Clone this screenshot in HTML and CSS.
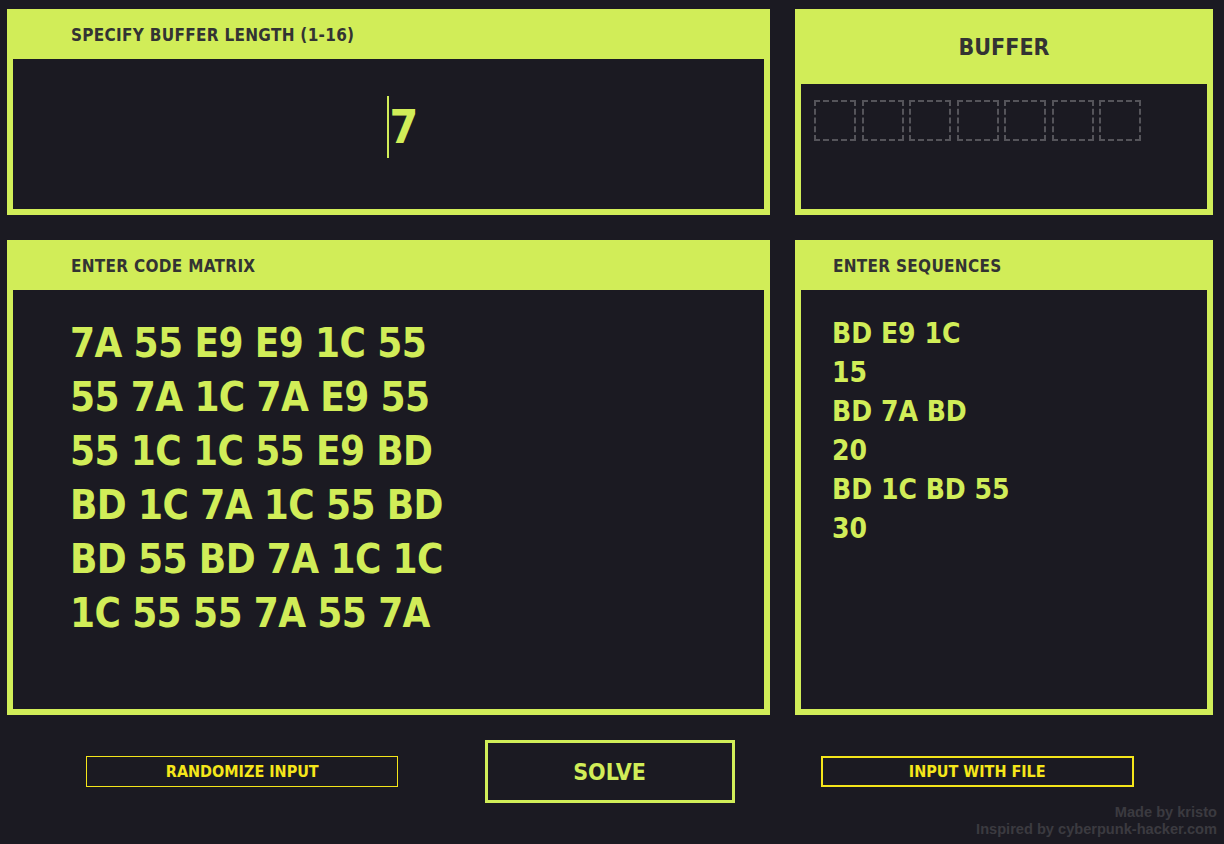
FILE: index.html
```html
<!DOCTYPE html>
<html lang="en">
<head>
    <meta charset="UTF-8">
    <meta name="viewport" content="width=device-width, initial-scale=1.0">
    <title>Breach Protocol Solver</title>
    <link rel="stylesheet" href="styles.css">
</head>
<body>
    <div class="board">
        <section class="panel">
            <div class="panel-head">SPECIFY BUFFER LENGTH (1-16)</div>
            <div class="panel-body length-body">
                <span class="caret"></span><span class="length-value">7</span>
            </div>
        </section>

        <section class="panel">
            <div class="panel-head buffer-head">BUFFER</div>
            <div class="panel-body buffer-body">
                <span class="slot"></span>
                <span class="slot"></span>
                <span class="slot"></span>
                <span class="slot"></span>
                <span class="slot"></span>
                <span class="slot"></span>
                <span class="slot"></span>
            </div>
        </section>

        <section class="panel">
            <div class="panel-head">ENTER CODE MATRIX</div>
            <div class="panel-body matrix-body">
                <div>7A 55 E9 E9 1C 55</div>
                <div>55 7A 1C 7A E9 55</div>
                <div>55 1C 1C 55 E9 BD</div>
                <div>BD 1C 7A 1C 55 BD</div>
                <div>BD 55 BD 7A 1C 1C</div>
                <div>1C 55 55 7A 55 7A</div>
            </div>
        </section>

        <section class="panel">
            <div class="panel-head seq-head">ENTER SEQUENCES</div>
            <div class="panel-body seq-body">
                <div>BD E9 1C</div>
                <div>15</div>
                <div>BD 7A BD</div>
                <div>20</div>
                <div>BD 1C BD 55</div>
                <div>30</div>
            </div>
        </section>
    </div>

    <div class="actions">
        <button type="button" class="btn-small">RANDOMIZE INPUT</button>
        <button type="button" class="btn-solve">SOLVE</button>
        <button type="button" class="btn-small btn-file">INPUT WITH FILE</button>
    </div>

    <footer>
        <div>Made by kristo</div>
        <div>Inspired by cyberpunk-hacker.com</div>
    </footer>
</body>
</html>
```

FILE: styles.css
```css
body {
    margin: 0;
    padding: 0;
    background-color: #1b1a22;
    font-family: "DejaVu Sans Condensed", "DejaVu Sans", sans-serif;
    font-weight: bold;
    width: 1224px;
    height: 844px;
    overflow: hidden;
}

.board {
    display: grid;
    grid-template-columns: 763px 418px;
    grid-template-rows: 206px 475px;
    gap: 25px;
    padding: 9px 0 0 7px;
}

.panel {
    background-color: #d1ed58;
    padding: 0 6px 6px;
    display: flex;
    flex-direction: column;
}

.panel-head {
    height: 50px;
    display: flex;
    align-items: center;
    padding-left: 58px;
    padding-top: 1px;
    box-sizing: border-box;
    color: #333333;
    font-size: 17px;
    letter-spacing: 0.3px;
}

.buffer-head {
    height: 75px;
    padding-left: 0;
    justify-content: center;
    font-size: 23px;
    letter-spacing: 0;
}

.seq-head {
    padding-left: 32px;
}

.panel-body {
    flex: 1;
    background-color: #1b1a22;
    color: #d1ed58;
}

/* buffer length input */
.length-body {
    display: flex;
    justify-content: center;
    align-items: center;
    padding: 0 0 14px 28px;
}

.caret {
    width: 2px;
    height: 62px;
    background-color: #d1ed58;
    margin-right: 1px;
}

.length-value {
    font-size: 46px;
}

/* buffer slots */
.buffer-body {
    display: flex;
    align-items: flex-start;
    gap: 5.5px;
    padding: 16px 0 0 13px;
}

.slot {
    width: 38px;
    height: 37px;
    border: 2px dashed #55545a;
}

/* code matrix */
.matrix-body {
    padding: 26px 0 0 57px;
    font-size: 40px;
    line-height: 54px;
    letter-spacing: -0.6px;
}

/* sequences */
.seq-body {
    padding: 24px 0 0 31px;
    font-size: 28px;
    line-height: 39px;
}

/* buttons */
.actions {
    display: flex;
    justify-content: space-evenly;
    align-items: center;
    margin-top: 25px;
    padding-right: 4px;
}

button {
    font-family: "DejaVu Sans Condensed", "DejaVu Sans", sans-serif;
    font-weight: bold;
    background: none;
    cursor: pointer;
    padding: 0;
}

.btn-small {
    width: 312px;
    height: 31px;
    border: 1px solid #f5e61a;
    color: #f5e61a;
    font-size: 16px;
}

.btn-file {
    width: 313px;
    border-width: 2px;
}

.btn-solve {
    width: 250px;
    height: 63px;
    border: 3px solid #d1ed58;
    color: #d1ed58;
    font-size: 23px;
}

footer {
    margin-top: 1px;
    padding-right: 7px;
    text-align: right;
    color: #3b3a40;
    font-family: "Liberation Sans", Arial, sans-serif;
    font-size: 14.6px;
    line-height: 17px;
}
```
